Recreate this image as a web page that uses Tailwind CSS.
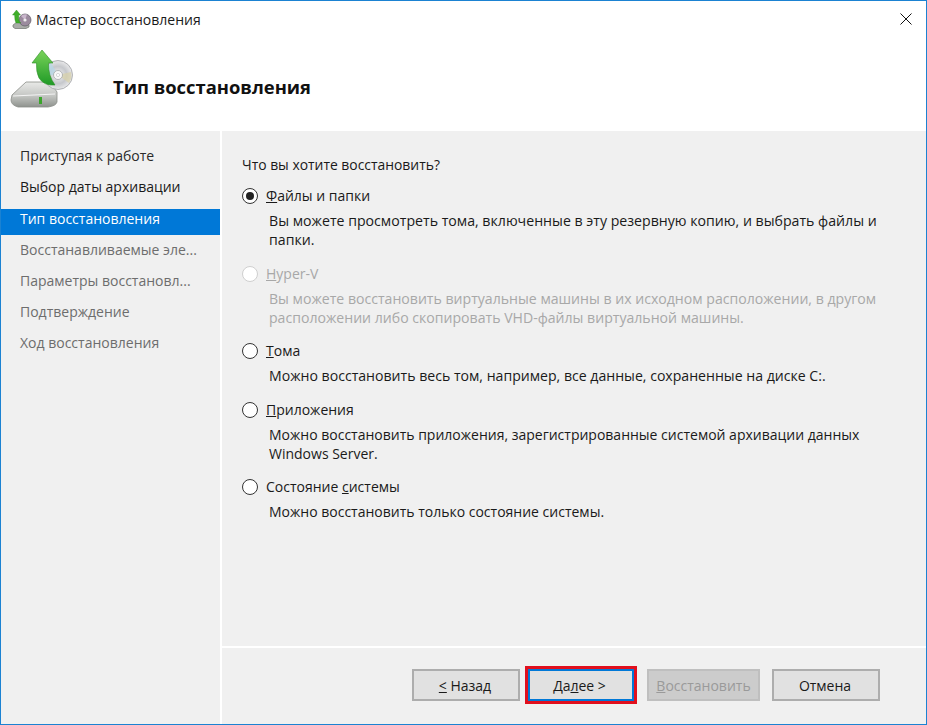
<!DOCTYPE html>
<html lang="ru">
<head>
    <meta charset="UTF-8">
    <title>Мастер восстановления</title>
    <script src="https://cdn.jsdelivr.net/npm/@tailwindcss/browser@4"></script>
</head>
<body class="bg-white">
    <div class="w-[927px] h-[725px] flex flex-col bg-white border border-[#1b82d2] overflow-hidden font-['Open_Sans','Noto_Sans',sans-serif] text-[14px] text-[#1a1a1a]">

        <!-- title bar -->
        <div class="h-[38px] shrink-0 flex items-center pl-[11px] pr-[14px]">
            <svg class="w-[20px] h-[20px] shrink-0 blur-[0.3px]" viewBox="0 0 20 20">
                <path d="M1 15 L5 12 L15 12 L17 15 L17 17 L14 18.5 L3 18.5 L1 17 Z" fill="#a9aca8" stroke="#6f736e" stroke-width="0.7"/>
                <circle cx="13" cy="10" r="6" fill="#9b8b9e" stroke="#5f5a64" stroke-width="0.7"/>
                <path d="M13 10 L9 6 A6 6 0 0 1 15 4.5 Z" fill="#c9b6cc"/>
                <circle cx="13" cy="10" r="1.6" fill="#eee"/>
                <path d="M4.5 0 L8.5 5 L6.8 5 L6.8 9 Q6.8 12 9 13 L4 13 Q2.6 10 2.6 5 L0.5 5 Z" fill="#3fae2a" stroke="#2a8a1d" stroke-width="0.4"/>
            </svg>
            <span class="ml-[4px] -mt-[1px] text-[14px]">Мастер восстановления</span>
            <svg class="w-[12px] h-[12px] ml-auto -mt-[2px]" viewBox="0 0 12 12"><path d="M0.5 0.5 L11.5 11.5 M11.5 0.5 L0.5 11.5" stroke="#111" stroke-width="1" fill="none"/></svg>
        </div>

        <!-- header -->
        <div class="h-[92px] shrink-0 flex items-center">
            <svg class="w-[64px] h-[64px] ml-[9px] shrink-0 -mt-[10px] blur-[0.4px]" viewBox="0 0 64 64">
                <defs>
                    <linearGradient id="hdd" x1="0" y1="0" x2="0" y2="1"><stop offset="0" stop-color="#e9eae8"/><stop offset="0.55" stop-color="#c4c6c3"/><stop offset="1" stop-color="#8f938e"/></linearGradient>
                    <linearGradient id="arrow" x1="0" y1="0" x2="0" y2="1"><stop offset="0" stop-color="#7ad35a"/><stop offset="1" stop-color="#1f9a26"/></linearGradient>
                    <radialGradient id="disc"><stop offset="0" stop-color="#f4f4f4"/><stop offset="0.6" stop-color="#c6c8cc"/><stop offset="1" stop-color="#e9e9ea"/></radialGradient>
                </defs>
                <path d="M2 47 L16 34 L40 34 L47 44 L47 54 Q46 58 38 59 L8 59 Q1 57 1 52 Z" fill="url(#hdd)" stroke="#8a8d88" stroke-width="0.8"/>
                <path d="M3 48 L45 46" stroke="#f4f4f4" stroke-width="1.2" fill="none"/>
                <rect x="29" y="49" width="3" height="7" fill="#3aa52a"/>
                <circle cx="48" cy="27" r="14.5" fill="url(#disc)" stroke="#9fa1a4" stroke-width="0.8"/>
                <path d="M48 27 L41 15 A 14 14 0 0 0 34 27 Z" fill="#b8d7e6" opacity="0.8"/>
                <path d="M48 27 L61 24 A 14 14 0 0 1 59 35 Z" fill="#d8d2a8" opacity="0.7"/>
                <circle cx="48" cy="27" r="4.5" fill="#f7f7f7" stroke="#9b9da0" stroke-width="0.7"/>
                <circle cx="48" cy="27" r="1.6" fill="#fff" stroke="#b0b2b5" stroke-width="0.5"/>
                <path d="M32 2 L43 15 L38.5 15 Q38 28 45 37 Q34 38 29 30 Q26 24 26.5 15 L22 15 Z" fill="url(#arrow)" stroke="#2d8f26" stroke-width="0.6"/>
            </svg>
            <h1 class="ml-[39px] mt-[4px] text-[18.4px] leading-none font-bold text-[#111]">Тип восстановления</h1>
        </div>

        <!-- body -->
        <div class="flex-1 min-h-0 flex">
            <!-- steps -->
            <nav class="w-[219px] shrink-0 bg-[#f0f0f0] pt-[9px]">
                <div class="h-[31px] pl-[19px] flex items-center text-[#2a2a2a]">Приступая к работе</div>
                <div class="h-[31px] pl-[19px] flex items-center text-[#1a1a1a]">Выбор даты архивации</div>
                <div class="h-[26px] mt-[7px] -mb-[1px] pl-[19px] flex items-center text-white bg-[#0078d7] pb-[8px]">Тип восстановления</div>
                <div class="h-[31px] pl-[19px] flex items-center text-[#6d6d6d]">Восстанавливаемые эле...</div>
                <div class="h-[31px] pl-[19px] flex items-center text-[#6d6d6d]">Параметры восстановл...</div>
                <div class="h-[31px] pl-[19px] flex items-center text-[#6d6d6d]">Подтверждение</div>
                <div class="h-[31px] pl-[19px] flex items-center text-[#6d6d6d]">Ход восстановления</div>
            </nav>

            <div class="ml-[2px] flex-1 flex flex-col min-w-0">
                <!-- options -->
                <div class="h-[515px] shrink-0 bg-[#f0f0f0] pl-[20px] pt-[24px] leading-[19px]">
                    <p class="mb-[12px] text-[13.9px]">Что вы хотите восстановить?</p>

                    <div class="flex items-center h-[19px]">
                        <span class="w-[16px] h-[16px] rounded-full border border-[#333] bg-white flex items-center justify-center shrink-0"><span class="w-[8px] h-[8px] rounded-full bg-[#222]"></span></span>
                        <span class="ml-[8px]"><u>Ф</u>айлы и папки</span>
                    </div>
                    <p class="ml-[27px] mt-[6px] w-[640px] text-[14.15px]">Вы можете просмотреть тома, включенные в эту резервную копию, и выбрать файлы и папки.</p>

                    <div class="flex items-center h-[19px] mt-[15px] text-[#a8a8a8]">
                        <span class="w-[16px] h-[16px] rounded-full border border-[#cfcfcf] bg-white shrink-0"></span>
                        <span class="ml-[8px]"><u>H</u>yper-V</span>
                    </div>
                    <p class="ml-[27px] mt-[6px] w-[640px] text-[14.1px] text-[#a8a8a8]">Вы можете восстановить виртуальные машины в их исходном расположении, в другом расположении либо скопировать VHD-файлы виртуальной машины.</p>

                    <div class="flex items-center h-[19px] mt-[14px]">
                        <span class="w-[16px] h-[16px] rounded-full border border-[#333] bg-white shrink-0"></span>
                        <span class="ml-[8px]"><u>Т</u>ома</span>
                    </div>
                    <p class="ml-[27px] mt-[6px] text-[14.1px]">Можно восстановить весь том, например, все данные, сохраненные на диске C:.</p>

                    <div class="flex items-center h-[19px] mt-[15px]">
                        <span class="w-[16px] h-[16px] rounded-full border border-[#333] bg-white shrink-0"></span>
                        <span class="ml-[8px]"><u>П</u>риложения</span>
                    </div>
                    <p class="ml-[27px] mt-[6px] w-[640px]">Можно восстановить приложения, зарегистрированные системой архивации данных Windows Server.</p>

                    <div class="flex items-center h-[19px] mt-[14px]">
                        <span class="w-[16px] h-[16px] rounded-full border border-[#333] bg-white shrink-0"></span>
                        <span class="ml-[8px]">Состояние <u>с</u>истемы</span>
                    </div>
                    <p class="ml-[27px] mt-[6px]">Можно восстановить только состояние системы.</p>
                </div>

                <!-- footer -->
                <div class="mt-[2px] flex-1 bg-[#f0f0f0] flex items-start pt-[21px] pl-[190px]">
                    <button class="w-[108px] h-[32px] border-2 border-[#adadad] bg-[#e1e1e1] text-[#1a1a1a] pr-[2px]"><u>&lt;</u> Назад</button>
                    <span class="ml-[5px] -mt-[3px] border-[3px] border-[#e0101e] block">
                        <button class="block w-[106px] h-[32px] border-2 border-[#0078d7] bg-[#e1e1e1] text-[#1a1a1a] pr-[3px]">Да<u>л</u>ее &gt;</button>
                    </span>
                    <button class="ml-[10px] w-[113px] h-[32px] bg-[#cccccc] border-2 border-[#bfbfbf] text-[#9a9a9a]"><u>В</u>осстановить</button>
                    <button class="ml-[12px] w-[108px] h-[32px] border-2 border-[#adadad] bg-[#e1e1e1] text-[#1a1a1a] pr-[2px]">Отмена</button>
                </div>
            </div>
        </div>
    </div>
</body>
</html>
